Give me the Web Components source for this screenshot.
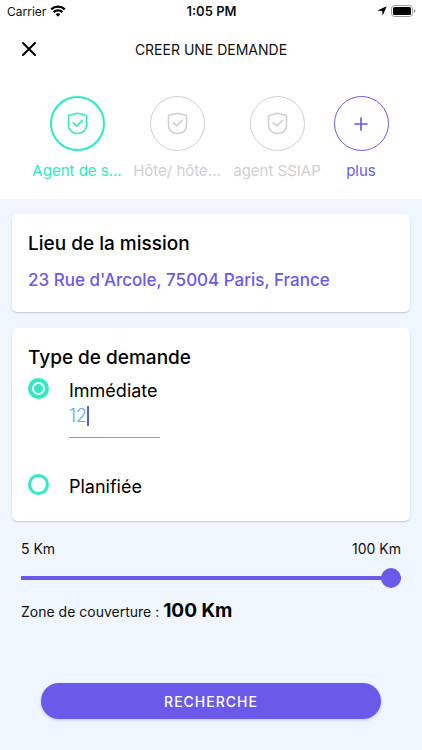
<!DOCTYPE html>
<html lang="fr">
<head>
  <meta charset="UTF-8" />
  <meta name="viewport" content="width=device-width, initial-scale=1.0" />
  <title>Créer une demande</title>
  <style>
    body {
      --accent: #6b5aea;
      --mint: #2eebc3;
      --muted: #cfcfcf;
      --page: #eff6ff;
      min-height: 100vh;
      margin: 0;
      background: var(--page);
      color: #111;
      font-family: Inter, "Liberation Sans", sans-serif;
      font-size: 14px;
    }

    main {
      display: grid;
      gap: 16px;
      padding: 15px 12px 0;
    }
  </style>
</head>
<body>
  <status-bar>1:05 PM</status-bar>
  <page-header>CREER UNE DEMANDE</page-header>
  <job-list>
    <job-item active>Agent de s...</job-item>
    <job-item>Hôte/ hôte...</job-item>
    <job-item>agent SSIAP</job-item>
    <job-item more>plus</job-item>
  </job-list>
  <main>
    <info-card>
      <span slot="title">Lieu de la mission</span>
      <mission-place>23 Rue d'Arcole, 75004 Paris, France</mission-place>
    </info-card>
    <info-card>
      <span slot="title">Type de demande</span>
      <request-type></request-type>
    </info-card>
  </main>
  <distance-slider min="5" max="100" value="100"></distance-slider>
  <search-button>RECHERCHE</search-button>

  <template id="status-bar-template">
    <style>
      :host {
        display: grid;
        grid-template-columns: 1fr auto 1fr;
        align-items: center;
        height: 22px;
        padding: 0 6px 0 7px;
        background: #fff;
        font-size: 12px;
      }

      div {
        display: flex;
        align-items: center;
        gap: 4px;
      }

      .right {
        justify-content: flex-end;
      }

      .time {
        font-weight: 600;
        font-size: 13px;
      }
    </style>
    <div>
      <span>Carrier</span>
      <svg width="16" height="12" viewBox="0 0 16 12" fill="none" stroke="#000" stroke-width="2.4">
        <path d="M1.2 4.4a9.8 9.8 0 0 1 13.6 0M3.6 7.2a6.3 6.3 0 0 1 8.8 0" />
        <path d="M5.6 9.3a3.5 3.5 0 0 1 4.8 0L8 11.8z" fill="#000" stroke="none" />
      </svg>
    </div>
    <span class="time"><slot></slot></span>
    <div class="right">
      <svg width="10" height="10" viewBox="0 0 10 10"><path d="M9.7.3 5.6 9.7 5.2 5 .3 4.6z" /></svg>
      <svg width="25" height="12" viewBox="0 0 25 12">
        <rect x=".5" y=".5" width="21" height="11" rx="3" fill="#fff" stroke="#999" />
        <rect x="2" y="2" width="18" height="8" rx="1.5" />
        <path d="M23 4v4q1.5-.5 1.5-2T23 4z" fill="#999" />
      </svg>
    </div>
  </template>

  <template id="page-header-template">
    <style>
      :host {
        display: grid;
        grid-template-columns: 32px 1fr 32px;
        align-items: center;
        height: 54px;
        padding: 0 13px;
        background: #fff;
      }

      button {
        display: grid;
        place-items: center;
        height: 32px;
        padding: 0;
        border: 0;
        background: none;
      }

      h1 {
        margin: 0;
        font-size: 14px;
        font-weight: 400;
        text-align: center;
      }
    </style>
    <button type="button" aria-label="Fermer">
      <svg width="14" height="14" viewBox="0 0 14 14" stroke="#000" stroke-width="2" stroke-linecap="round">
        <path d="m1 1 12 12M13 1 1 13" />
      </svg>
    </button>
    <h1><slot></slot></h1>
  </template>

  <template id="job-list-template">
    <style>
      :host {
        display: grid;
        grid-template-columns: repeat(3, 100px) 68px;
        justify-content: center;
        padding: 20px 0 18px;
        background: #fff;
      }
    </style>
    <slot></slot>
  </template>

  <template id="job-item-template">
    <style>
      :host {
        display: block;
        color: var(--muted);
      }

      :host([active]) {
        color: var(--mint);
      }

      :host([more]) {
        color: var(--accent);
      }

      button {
        display: flex;
        flex-direction: column;
        align-items: center;
        gap: 10px;
        width: 100%;
        padding: 0;
        border: 0;
        background: none;
        color: inherit;
        font: inherit;
        font-size: 15px;
        line-height: 20px;
        white-space: nowrap;
      }

      .ring {
        display: grid;
        place-items: center;
        box-sizing: border-box;
        width: 55px;
        height: 55px;
        border: 1px solid;
        border-radius: 50%;
      }

      :host([active]) .ring {
        border-width: 2px;
      }

      svg {
        fill: none;
        stroke: currentColor;
        stroke-linecap: round;
        stroke-linejoin: round;
      }

      .plus,
      :host([more]) .shield {
        display: none;
      }

      :host([more]) .plus {
        display: block;
      }
    </style>
    <button type="button">
      <span class="ring">
        <svg class="shield" width="21" height="23" viewBox="0 0 21 23" stroke-width="1.6">
          <path d="M10.5 1.2 1.5 3.6v10c0 5 4 7.9 9 7.9s9-2.9 9-7.9v-10z" />
          <path d="m6.3 10.6 3.4 3.4 5.6-5.6" />
        </svg>
        <svg class="plus" width="14" height="14" viewBox="0 0 14 14" stroke-width="1.7">
          <path d="M7 1v12M1 7h12" />
        </svg>
      </span>
      <span><slot></slot></span>
    </button>
  </template>

  <template id="info-card-template">
    <style>
      :host {
        display: block;
        padding: 18px 16px;
        border-radius: 5px;
        background: #fff;
        box-shadow: 0 1px 2px rgba(0, 0, 0, .2);
      }

      h2 {
        margin: 0;
        color: #000;
        font-size: 19px;
        font-weight: 500;
        line-height: 24px;
      }
    </style>
    <h2><slot name="title"></slot></h2>
    <slot></slot>
  </template>

  <template id="mission-place-template">
    <style>
      :host {
        display: block;
        padding: 14px 0 4px;
        color: var(--accent);
        font-size: 17px;
        font-weight: 500;
        line-height: 20px;
      }
    </style>
    <slot></slot>
  </template>

  <template id="request-type-template">
    <style>
      :host {
        display: grid;
        grid-template-columns: 21px auto;
        justify-content: start;
        column-gap: 20px;
        padding-bottom: 4px;
        font-size: 18px;
        line-height: 24px;
      }

      input[type="radio"] {
        appearance: none;
        width: 21px;
        height: 21px;
        margin: 8px 0 0;
        border: 3px solid var(--mint);
        border-radius: 50%;
      }

      input[type="radio"]:checked {
        border-width: 4px;
        background: radial-gradient(circle, var(--mint) 4px, #fff 5px);
      }

      label {
        padding-top: 9px;
        color: #000;
      }

      .amount {
        display: flex;
        grid-column: 2;
        align-items: center;
        width: 91px;
        height: 35px;
        margin-bottom: 28px;
        box-sizing: border-box;
        padding-bottom: 8px;
        border-bottom: 1px solid #62a8ea;
      }

      .amount input {
        field-sizing: content;
        max-width: 80px;
        padding: 0;
        border: 0;
        outline: 0;
        background: none;
        color: #62a8ea;
        font: inherit;
        font-weight: 300;
      }

      .caret {
        width: 2px;
        height: 20px;
        background: #4c63d8;
      }
    </style>
    <input type="radio" name="type" id="now" checked />
    <label for="now">Immédiate</label>
    <div class="amount">
      <input type="text" inputmode="numeric" aria-label="Durée" value="12" />
      <span class="caret"></span>
    </div>
    <input type="radio" name="type" id="later" />
    <label for="later">Planifiée</label>
  </template>

  <template id="distance-slider-template">
    <style>
      :host {
        display: block;
        padding: 18px 21px 0;
      }

      .bounds {
        display: flex;
        justify-content: space-between;
        line-height: 20px;
      }

      input {
        --fill: 100%;
        appearance: none;
        display: block;
        width: 100%;
        height: 20px;
        margin: 9px 0 11px;
        background: linear-gradient(to right, var(--accent) var(--fill), #cdd3e4 var(--fill)) center / 100% 4px no-repeat;
        border-radius: 2px;
      }

      input::-webkit-slider-thumb {
        appearance: none;
        width: 20px;
        height: 20px;
        border-radius: 50%;
        background: var(--accent);
      }

      label {
        display: block;
        line-height: 24px;
      }

      strong {
        color: #000;
        font-size: 19px;
        font-weight: 700;
      }
    </style>
    <div class="bounds"><span id="low"></span><span id="high"></span></div>
    <input type="range" id="range" />
    <label for="range">Zone de couverture : <strong></strong></label>
  </template>

  <template id="search-button-template">
    <style>
      :host {
        display: block;
        padding: 59px 41px 31px;
      }

      button {
        display: block;
        width: 100%;
        height: 36px;
        border: 0;
        border-radius: 18px;
        background: var(--accent);
        box-shadow: 0 1px 3px rgba(80, 70, 160, .3);
        color: #fff;
        font: inherit;
        font-weight: 500;
        letter-spacing: 1px;
      }
    </style>
    <button type="submit"><slot></slot></button>
  </template>

  <script>
    class TemplateElement extends HTMLElement {
      constructor() {
        super();
        const template = document.getElementById(`${this.localName}-template`);
        this.attachShadow({ mode: 'open' }).appendChild(template.content.cloneNode(true));
      }
    }

    [
      'status-bar',
      'page-header',
      'job-list',
      'job-item',
      'info-card',
      'mission-place',
      'request-type',
      'search-button',
    ].forEach(name => customElements.define(name, class extends TemplateElement {}));

    class DistanceSlider extends TemplateElement {
      connectedCallback() {
        this.input = this.shadowRoot.querySelector('input');
        this.input.min = this.getAttribute('min');
        this.input.max = this.getAttribute('max');
        this.input.value = this.getAttribute('value');
        this.shadowRoot.getElementById('low').textContent = `${this.input.min} Km`;
        this.shadowRoot.getElementById('high').textContent = `${this.input.max} Km`;
        this.input.oninput = this.render.bind(this);
        this.render();
      }

      render() {
        const { min, max, value } = this.input;
        this.input.style.setProperty('--fill', `${(value - min) / (max - min) * 100}%`);
        this.shadowRoot.querySelector('strong').textContent = `${value} Km`;
      }
    }
    customElements.define('distance-slider', DistanceSlider);
  </script>
</body>
</html>
